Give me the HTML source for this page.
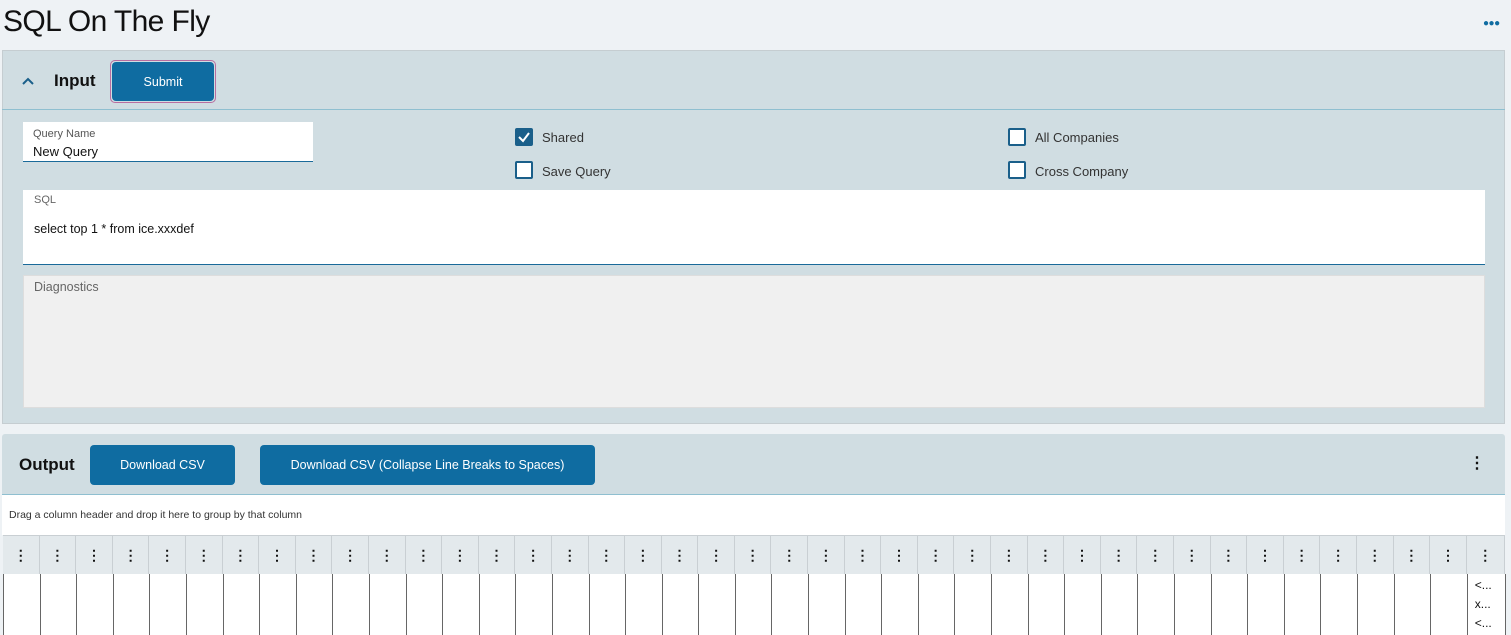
<!DOCTYPE html>
<html><head><meta charset="utf-8"><style>
*{box-sizing:border-box;margin:0;padding:0}
body{width:1511px;height:634px;overflow:hidden;background:#eef2f5;font-family:"Liberation Sans",sans-serif;position:relative;color:#222}
.a{position:absolute}
.btn{position:absolute;background:#0f6ca1;color:#fff;border-radius:4px;font-size:12.5px;display:flex;align-items:center;justify-content:center}
.cb{position:absolute;width:18px;height:18px;border:2px solid #1a5f8a;background:#fff;border-radius:2px}
.lbl{position:absolute;font-size:13px;color:#333}
.grid{display:grid;grid-template-columns:repeat(40,36.6px) 38px}
.h div{height:38px;background:#e3e9ec;border-right:1px solid #c9cfd3;display:flex;align-items:center;justify-content:center;font-weight:bold;font-size:14px;line-height:1;color:#111}
.b div{height:61px;border-right:1px solid #666;background:#fff}
</style></head><body>
<div class="a" style="left:3px;top:5px;font-size:30px;color:#111;letter-spacing:-0.6px">SQL On The Fly</div>
<div class="a" style="left:1483px;top:18px;color:#0f6ca1;font-size:10px;font-weight:bold;letter-spacing:-0.5px">●●●</div>

<div class="a" style="left:2px;top:50px;width:1503px;height:374px;background:#d0dde2;border:1px solid #c5cdd1"></div>
<div class="a" style="left:2px;top:109px;width:1503px;height:1px;background:#8fbfd0"></div>
<svg class="a" style="left:21px;top:76px" width="14" height="10"><path d="M2 8 L7 3 L12 8" stroke="#1a5f8a" stroke-width="2" fill="none"/></svg>
<div class="a" style="left:54px;top:71px;font-size:17px;font-weight:bold;color:#111">Input</div>
<div class="a" style="left:110px;top:60px;width:106px;height:43px;border:1px solid #b86ea0;border-radius:5px"></div>
<div class="btn" style="left:112px;top:62px;width:102px;height:39px">Submit</div>

<div class="a" style="left:23px;top:122px;width:290px;height:40px;background:#fff;border-bottom:1px solid #1a6a9a"></div>
<div class="a" style="left:33px;top:128px;font-size:11px;color:#555">Query Name</div>
<div class="a" style="left:33px;top:144px;font-size:13px;color:#111">New Query</div>

<div class="cb" style="left:515px;top:128px;background:#1a5f8a"><svg width="14" height="14" style="position:absolute;left:0;top:0"><path d="M2 7 L6 11 L12 3" stroke="#fff" stroke-width="2" fill="none"/></svg></div>
<div class="lbl" style="left:542px;top:130px">Shared</div>
<div class="cb" style="left:515px;top:161px"></div>
<div class="lbl" style="left:542px;top:164px">Save Query</div>
<div class="cb" style="left:1008px;top:128px"></div>
<div class="lbl" style="left:1035px;top:130px">All Companies</div>
<div class="cb" style="left:1008px;top:161px"></div>
<div class="lbl" style="left:1035px;top:164px">Cross Company</div>

<div class="a" style="left:23px;top:190px;width:1462px;height:75px;background:#fff;border-bottom:1px solid #1a6a9a"></div>
<div class="a" style="left:34px;top:194px;font-size:11px;color:#666">SQL</div>
<div class="a" style="left:34px;top:222px;font-size:12.5px;color:#111">select top 1 * from ice.xxxdef</div>
<div class="a" style="left:23px;top:275px;width:1462px;height:133px;background:#f0f0f0;border:1px solid #ddd"></div>
<div class="a" style="left:34px;top:280px;font-size:12.5px;color:#666">Diagnostics</div>

<div class="a" style="left:2px;top:434px;width:1503px;height:62px;background:#d0dde2;border-radius:3px 3px 0 0"></div>
<div class="a" style="left:2px;top:494px;width:1503px;height:1px;background:#8fbfd0"></div>
<div class="a" style="left:19px;top:455px;font-size:17px;font-weight:bold;color:#111">Output</div>
<div class="btn" style="left:90px;top:445px;width:145px;height:40px">Download CSV</div>
<div class="btn" style="left:260px;top:445px;width:335px;height:40px">Download CSV (Collapse Line Breaks to Spaces)</div>
<div class="a" style="left:1469px;top:453px;font-weight:bold;font-size:16px;color:#111">⋮</div>
<div class="a" style="left:2px;top:495px;width:1503px;height:40px;background:#fff"></div>
<div class="a" style="left:9px;top:509px;font-size:10.5px;color:#333">Drag a column header and drop it here to group by that column</div>

<div class="a grid h" style="left:3px;top:535px;width:1502px;border-top:1px solid #c9cfd3;border-bottom:2px solid #777">
<div>⋮</div><div>⋮</div><div>⋮</div><div>⋮</div><div>⋮</div><div>⋮</div><div>⋮</div><div>⋮</div><div>⋮</div><div>⋮</div><div>⋮</div><div>⋮</div><div>⋮</div><div>⋮</div><div>⋮</div><div>⋮</div><div>⋮</div><div>⋮</div><div>⋮</div><div>⋮</div><div>⋮</div><div>⋮</div><div>⋮</div><div>⋮</div><div>⋮</div><div>⋮</div><div>⋮</div><div>⋮</div><div>⋮</div><div>⋮</div><div>⋮</div><div>⋮</div><div>⋮</div><div>⋮</div><div>⋮</div><div>⋮</div><div>⋮</div><div>⋮</div><div>⋮</div><div>⋮</div><div>⋮</div>
</div>
<div class="a grid b" style="left:3px;top:574px;width:1502px;border-left:1px solid #666">
<div></div><div></div><div></div><div></div><div></div><div></div><div></div><div></div><div></div><div></div><div></div><div></div><div></div><div></div><div></div><div></div><div></div><div></div><div></div><div></div><div></div><div></div><div></div><div></div><div></div><div></div><div></div><div></div><div></div><div></div><div></div><div></div><div></div><div></div><div></div><div></div><div></div><div></div><div></div><div></div><div style="font-size:12px;line-height:19px;padding:2px 0 0 7px;color:#111">&lt;...<br>x...<br>&lt;...</div>
</div>
</body></html>
